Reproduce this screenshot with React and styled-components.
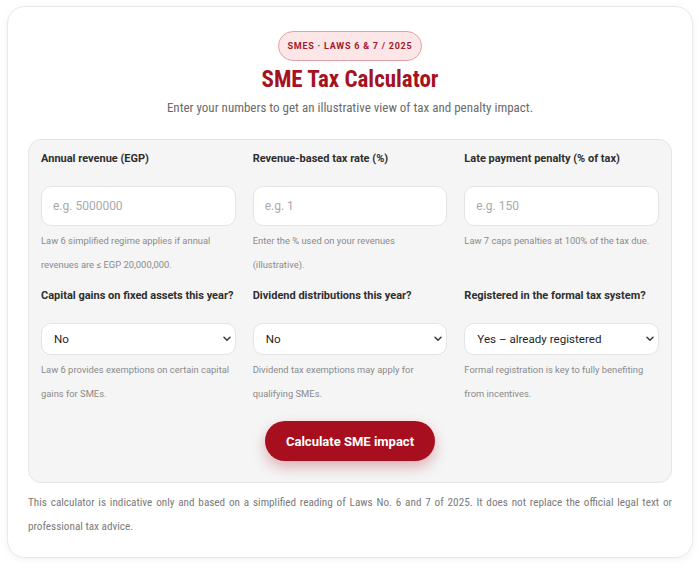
import React from "react";
import styled, { createGlobalStyle } from "styled-components";

const GlobalStyle = createGlobalStyle`
  * { box-sizing: border-box; }
  body {
    margin: 0;
    background: #ffffff;
    font-family: Roboto, "Noto Sans", sans-serif;
    color: #333;
  }
`;

const Page = styled.div`
  padding: 6px 7px;
`;

const Card = styled.section`
  background: #fff;
  border: 1px solid #e9e9e9;
  border-radius: 18px;
  box-shadow: 0 2px 8px rgba(0, 0, 0, 0.05);
  padding: 24px 20px 18px;
  display: flex;
  flex-direction: column;
`;

const Header = styled.header`
  display: flex;
  flex-direction: column;
  align-items: center;
`;

const Badge = styled.div`
  height: 30px;
  padding: 0 9px;
  display: flex;
  align-items: center;
  border-radius: 15px;
  background: #fce6e8;
  border: 1px solid #e3a1a9;
  color: #a51a2a;
  font-family: Roboto, sans-serif;
  font-size: 9px;
  font-weight: 700;
  letter-spacing: 0.75px;
`;

const Title = styled.h1`
  margin: 7px 0 0;
  font-family: "Roboto Condensed", Roboto, sans-serif;
  font-size: 23px;
  font-weight: 700;
  line-height: 24px;
  color: #a5131f;
`;

const Subtitle = styled.p`
  margin: 8px 0 0;
  font-family: "Roboto Condensed", Roboto, sans-serif;
  font-size: 13px;
  line-height: 16px;
  color: #6b6b6b;
`;

const Panel = styled.div`
  margin-top: 23px;
  background: #f5f5f5;
  border: 1px solid #e6e6e6;
  border-radius: 13px;
  padding: 12px 12px 21px;
  display: flex;
  flex-direction: column;
  align-items: center;
`;

const Grid = styled.div`
  align-self: stretch;
  display: grid;
  grid-template-columns: repeat(3, 1fr);
  column-gap: 17px;
  row-gap: 12px;
`;

const Field = styled.div`
  display: flex;
  flex-direction: column;
`;

const Label = styled.label`
  font-size: 11px;
  font-weight: 700;
  line-height: 14px;
  color: #2e2e2e;
  margin-bottom: 20px;
`;

const Input = styled.input`
  height: 40px;
  width: 100%;
  border: 1px solid #e4e4e4;
  border-radius: 10px;
  background: #fff;
  padding: 0 11px;
  font-family: Roboto, sans-serif;
  font-size: 12px;
  color: #222;
  outline: none;
  &::placeholder {
    color: #a9a9a9;
  }
`;

const SelectWrap = styled.div`
  position: relative;
  height: 32px;
`;

const Select = styled.select`
  appearance: none;
  height: 32px;
  width: 100%;
  border: 1px solid #e4e4e4;
  border-radius: 10px;
  background: #fff;
  padding: 0 22px 0 12px;
  font-family: Roboto, sans-serif;
  font-size: 11.6px;
  color: #1f1f1f;
  outline: none;
`;

const Chevron = styled.svg`
  position: absolute;
  right: 5px;
  top: 13px;
  width: 8px;
  height: 6px;
  pointer-events: none;
`;

const Help = styled.p`
  margin: 3px 0 0;
  font-size: 9.4px;
  line-height: 24px;
  color: #8a8a8a;
`;

const Button = styled.button`
  margin-top: 15px;
  height: 40px;
  padding: 0 21px;
  border: none;
  border-radius: 20px;
  background: #a70f1f;
  color: #fff;
  font-family: Roboto, sans-serif;
  font-size: 13px;
  font-weight: 700;
  box-shadow: 0 6px 14px rgba(167, 15, 31, 0.3);
  cursor: pointer;
`;

const Disclaimer = styled.p`
  margin: 8px 0 0;
  font-family: "Roboto Condensed", Roboto, sans-serif;
  font-size: 11.2px;
  line-height: 24px;
  color: #7a7a7a;
  text-align: justify;
`;

const fields = [
  {
    label: "Annual revenue (EGP)",
    placeholder: "e.g. 5000000",
    help: "Law 6 simplified regime applies if annual revenues are ≤ EGP 20,000,000.",
  },
  {
    label: "Revenue-based tax rate (%)",
    placeholder: "e.g. 1",
    help: "Enter the % used on your revenues (illustrative).",
  },
  {
    label: "Late payment penalty (% of tax)",
    placeholder: "e.g. 150",
    help: "Law 7 caps penalties at 100% of the tax due.",
  },
  {
    label: "Capital gains on fixed assets this year?",
    options: ["No", "Yes"],
    help: "Law 6 provides exemptions on certain capital gains for SMEs.",
  },
  {
    label: "Dividend distributions this year?",
    options: ["No", "Yes"],
    help: "Dividend tax exemptions may apply for qualifying SMEs.",
  },
  {
    label: "Registered in the formal tax system?",
    options: ["Yes – already registered", "No – not yet registered"],
    help: "Formal registration is key to fully benefiting from incentives.",
  },
];

export default function App() {
  return (
    <>
      <GlobalStyle />
      <Page>
        <Card>
          <Header>
            <Badge>SMES · LAWS 6 &amp; 7 / 2025</Badge>
            <Title>SME Tax Calculator</Title>
            <Subtitle>
              Enter your numbers to get an illustrative view of tax and penalty impact.
            </Subtitle>
          </Header>
          <Panel>
            <Grid>
              {fields.map((f) => (
                <Field key={f.label}>
                  <Label>{f.label}</Label>
                  {f.options ? (
                    <SelectWrap>
                      <Select defaultValue={f.options[0]}>
                        {f.options.map((o) => (
                          <option key={o}>{o}</option>
                        ))}
                      </Select>
                      <Chevron viewBox="0 0 8 6" fill="none">
                        <path
                          d="M1 1.2l3 3 3-3"
                          stroke="#3a3a3a"
                          strokeWidth="1.5"
                          strokeLinecap="round"
                          strokeLinejoin="round"
                        />
                      </Chevron>
                    </SelectWrap>
                  ) : (
                    <Input type="text" placeholder={f.placeholder} />
                  )}
                  <Help>{f.help}</Help>
                </Field>
              ))}
            </Grid>
            <Button type="button">Calculate SME impact</Button>
          </Panel>
          <Disclaimer>
            This calculator is indicative only and based on a simplified reading of Laws No. 6 and 7
            of 2025. It does not replace the official legal text or professional tax advice.
          </Disclaimer>
        </Card>
      </Page>
    </>
  );
}
